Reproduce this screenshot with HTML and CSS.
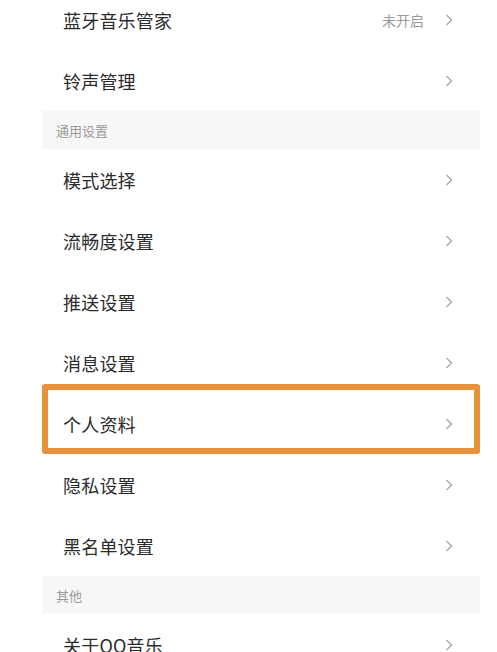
FILE: index.html
```html
<!DOCTYPE html>
<html lang="zh-CN">
<head>
<meta charset="utf-8">
<link rel="stylesheet" href="styles.css">
</head>
<body>
<div class="list">
  <div class="row"><span class="label">蓝牙音乐管家</span><span class="value">未开启</span><svg class="chev" viewBox="0 0 8 12"><path d="M1.5 1 L6.5 6 L1.5 11"/></svg></div>
  <div class="row"><span class="label">铃声管理</span><svg class="chev" viewBox="0 0 8 12"><path d="M1.5 1 L6.5 6 L1.5 11"/></svg></div>
  <div class="section">通用设置</div>
  <div class="row"><span class="label">模式选择</span><svg class="chev" viewBox="0 0 8 12"><path d="M1.5 1 L6.5 6 L1.5 11"/></svg></div>
  <div class="row"><span class="label">流畅度设置</span><svg class="chev" viewBox="0 0 8 12"><path d="M1.5 1 L6.5 6 L1.5 11"/></svg></div>
  <div class="row"><span class="label">推送设置</span><svg class="chev" viewBox="0 0 8 12"><path d="M1.5 1 L6.5 6 L1.5 11"/></svg></div>
  <div class="row"><span class="label">消息设置</span><svg class="chev" viewBox="0 0 8 12"><path d="M1.5 1 L6.5 6 L1.5 11"/></svg></div>
  <div class="row highlighted"><span class="label">个人资料</span><svg class="chev" viewBox="0 0 8 12"><path d="M1.5 1 L6.5 6 L1.5 11"/></svg><div class="hl-box"></div></div>
  <div class="row"><span class="label">隐私设置</span><svg class="chev" viewBox="0 0 8 12"><path d="M1.5 1 L6.5 6 L1.5 11"/></svg></div>
  <div class="row"><span class="label">黑名单设置</span><svg class="chev" viewBox="0 0 8 12"><path d="M1.5 1 L6.5 6 L1.5 11"/></svg></div>
  <div class="section">其他</div>
  <div class="row"><span class="label">关于QQ音乐</span><svg class="chev" viewBox="0 0 8 12"><path d="M1.5 1 L6.5 6 L1.5 11"/></svg></div>
</div>
</body>
</html>
```
FILE: styles.css
```css
html, body {
  margin: 0;
  padding: 0;
  background: #ffffff;
  overflow: hidden;
}
body {
  font-family: "Noto Sans CJK SC", "Noto Sans", sans-serif;
  width: 497px;
  height: 652px;
}
.list {
  margin-top: -11px;
  margin-left: 42px;
  width: 438px;
  display: flex;
  flex-direction: column;
}
.row {
  position: relative;
  height: 61px;
  display: flex;
  align-items: center;
  padding: 0 27px 0 21px;
  flex-shrink: 0;
}
.label {
  flex: 1;
  font-size: 18px;
  color: #2b2b2b;
  letter-spacing: 0.2px;
}
.value {
  font-size: 14px;
  color: #9a9a9a;
  margin-right: 21px;
}
.chev {
  width: 8px;
  height: 12px;
  fill: none;
  stroke: #a8a8a8;
  stroke-width: 1.4;
}
.section {
  height: 38px;
  display: flex;
  align-items: center;
  padding-left: 14px;
  background: #f7f7f7;
  font-size: 13px;
  color: #9a9a9a;
  flex-shrink: 0;
}
.hl-box {
  position: absolute;
  left: 0;
  right: 0;
  top: -9px;
  bottom: 0;
  border: 6px solid #e8913d;
  border-radius: 3px;
  pointer-events: none;
}
```
